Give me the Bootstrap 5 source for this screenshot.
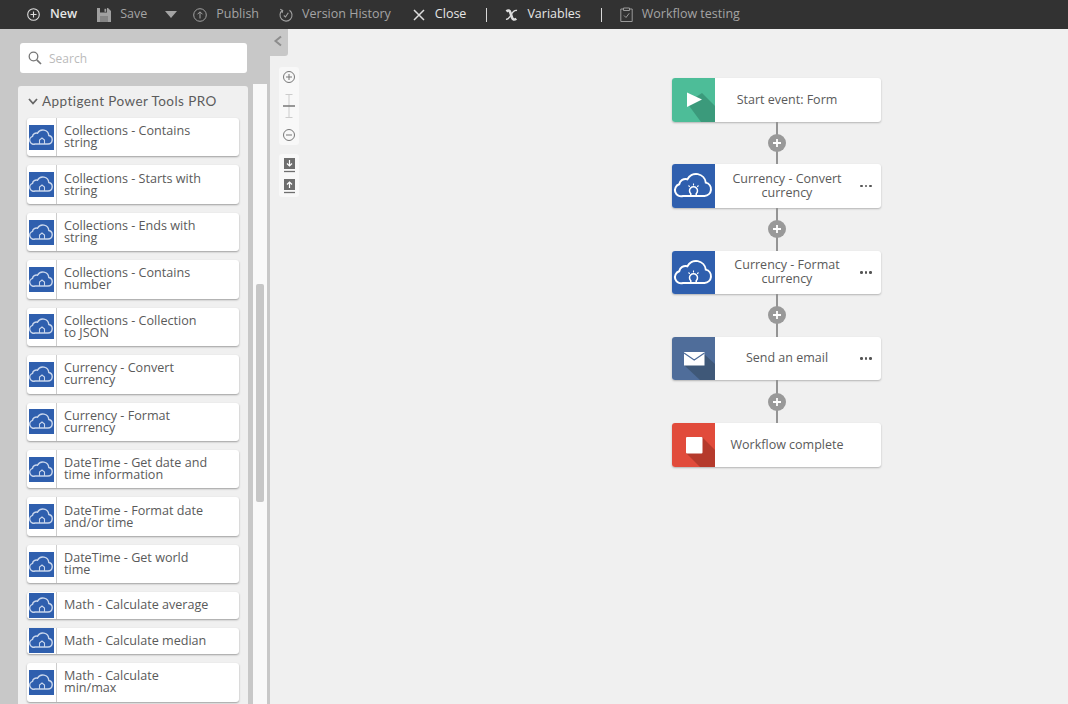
<!DOCTYPE html>
<html lang="en">
<head>
  <meta charset="UTF-8">
  <title>Workflow designer</title>
  <link href="https://cdn.jsdelivr.net/npm/bootstrap@5.3.0/dist/css/bootstrap.min.css" rel="stylesheet">
  <style>
    html, body { height: 100%; overflow: hidden; }
    body { font-family: "Open Sans", "Liberation Sans", sans-serif; font-size: 12px; color: #555; background: #f0f0f0; }

    .topbar { height: 29px; background: #323232; padding-left: 27px; color: #a4a4a4; font-size: 12.5px; }
    .tb-item { margin-right: 20px; gap: 9px; }
    .tb-item svg { display: block; flex: none; }
    .tb-on { color: #e6e6e6; }
    .tb-strong { font-weight: 600; gap: 10px; }
    .tb-close { gap: 10px; margin-left: 2px; }
    .tb-sep { width: 1px; height: 14px; background: #d8d8d8; margin-right: 18px; }
    .tb-caret { margin-right: 16px; margin-left: -2px; width: 0; height: 0; border: 6.5px solid transparent; border-top: 7px solid #a4a4a4; border-bottom: 0; }

    .main { height: 675px; }
    .side { width: 270px; background: #c8c8c8; flex: none; }
    .searchbox { position: relative; width: 227px; height: 30px; margin: 14px 0 13px 20px; background: #fff; border-radius: 3px; padding-left: 29px; color: #bbb; font-size: 12px; line-height: 31px; }
    .searchbox svg { position: absolute; left: 8px; top: 8px; }
    .side-body { height: 618px; }
    .panel { width: 230px; margin-left: 18px; background: #f0f0f0; border-radius: 3px 3px 0 0; padding: 0 9px; overflow: hidden; }
    .panel-head { height: 32px; padding-bottom: 2px; font-family: Lato, "Open Sans", sans-serif; font-size: 13.5px; letter-spacing: .43px; color: #5c5c5c; gap: 4px; margin-left: 1px; }
    .track { width: 14px; margin: -2px 0 0 5px; background: #f9f9f9; }
    .thumb { width: 8px; height: 218px; margin: 200px 0 0 3px; background: #c6c6c6; border-radius: 2px; }

    .tool { height: 38.43px; margin-bottom: 9px; background: #fff; border-radius: 3px; box-shadow: 0 1px 2px rgba(0,0,0,.35); }
    .tool-single { height: 26.5px; }
    .tool-icon { width: 30px; flex: none; border-right: 1px solid #ccc; padding-left: 2px; }
    .tool-text { padding-left: 7px; line-height: 12px; font-size: 12.6px; color: #5a5a5a; }

    .canvas { position: relative; flex: 1; background: #f0f0f0; padding-left: 9px; }
    .tab { position: absolute; left: 0; top: 0; width: 18px; height: 27px; background: #c8c8c8; border-radius: 0 0 3px 0; padding: 6px 0 0 3px; }
    .tab svg { display: block; }
    .zoombar { width: 20px; flex: none; margin-top: 38px; gap: 9px; }
    .zoom-group { background: #f8f8f8; border-radius: 3px; }
    .flow { margin: 49px 0 0 373px; width: 209px; }
    .node { height: 43.5px; background: #fff; border-radius: 3px; box-shadow: 0 1px 2px rgba(0,0,0,.25); overflow: hidden; }
    .node-icon { width: 43px; flex: none; }
    .node-icon svg { display: block; }
    .node-text { width: 144px; text-align: center; font-size: 12.5px; line-height: 14.5px; color: #5a5a5a; }
    .node-dots { width: 13px; margin-left: 1px; gap: 2px; }
    .node-dots i { width: 2.5px; height: 2.5px; border-radius: 50%; background: #555; }
    .wire { position: relative; height: 42.75px; }
    .wire::before { content: ""; position: absolute; left: 103.5px; top: 0; bottom: 0; width: 2px; background: #949494; }
    .plus { position: relative; width: 18px; height: 18px; margin-left: 95.5px; border-radius: 50%; background: #999; }
    .plus svg { display: block; }
  </style>
</head>
<body>
  <svg width="0" height="0" class="position-absolute">
    <symbol id="cloud" viewBox="0 0 25 25">
      <path d="M6 19h13a4.300 4.300 0 0 0 .8-8.500 6 6 0 0 0-11.300-2.300 4 4 0 0 0-5 3.200A3.800 3.800 0 0 0 6 19z" fill="none" stroke="#c9d6ec" stroke-width="1.400"/>
      <path d="M10.500 19v-4l2.500-2 2.500 2v4" fill="none" stroke="#c9d6ec" stroke-width="1.100"/>
    </symbol>
    <symbol id="cloud-big" viewBox="0 0 43 44">
      <path d="M11 32h21.500a6.800 6.800 0 0 0 1.300-13.400 9.800 9.800 0 0 0-18.400-3.400 6.500 6.500 0 0 0-8.200 5.100A6 6 0 0 0 11 32z" fill="none" stroke="#fff" stroke-width="2"/>
      <path d="M18.800 32v-2.300a4 4 0 1 1 5.400 0V32" fill="none" stroke="#fff" stroke-width="1.500"/>
      <path d="M21.500 19.500v2M16.500 21.500l1.300 1.300M26.500 21.500l-1.300 1.300" stroke="#fff" stroke-width="1.100"/>
    </symbol>
  </svg>

  <div class="topbar d-flex align-items-center">
    <div class="tb-item tb-on tb-strong d-flex align-items-center">
      <svg width="13" height="13" viewBox="0 0 13 13" fill="none" stroke="#ddd" stroke-width="1.100"><circle cx="6.500" cy="6.500" r="5.800"/><path d="M6.500 3.500v6M3.500 6.500h6"/></svg>
      <span>New</span>
    </div>
    <div class="tb-item d-flex align-items-center">
      <svg width="14" height="14" viewBox="0 0 14 14"><path d="M0 0h11l3 3v11H0z" fill="#a0a0a0"/><path d="M3 0h7v4.500H3z" fill="#323232"/><path d="M7.500 .8h1.700v3H7.500z" fill="#a0a0a0"/><path d="M3 8h8v6H3z" fill="#323232" opacity=".25"/></svg>
      <span>Save</span>
    </div>
    <div class="tb-caret"></div>
    <div class="tb-item d-flex align-items-center">
      <svg width="14" height="14" viewBox="0 0 14 14" fill="none" stroke="#a0a0a0" stroke-width="1"><circle cx="7" cy="7" r="6.300"/><path d="M7 10.500V4M4.500 6.300 7 3.800l2.500 2.500"/></svg>
      <span>Publish</span>
    </div>
    <div class="tb-item d-flex align-items-center">
      <svg width="14" height="15" viewBox="0 0 14 15" fill="none" stroke="#a0a0a0" stroke-width="1.100"><path d="M3.400 3.300A6 6 0 1 0 10.500 3.200"/><path d="M1.200 2.300 3.700 3.500 3 6"/><path d="M4.800 8.500 6.500 10 9.300 5.800"/></svg>
      <span>Version History</span>
    </div>
    <div class="tb-item tb-close tb-on d-flex align-items-center">
      <svg width="12" height="12" viewBox="0 0 12 12" stroke="#ddd" stroke-width="1.500"><path d="M1 1l10 10M11 1 1 11"/></svg>
      <span>Close</span>
    </div>
    <div class="tb-sep"></div>
    <div class="tb-item tb-on d-flex align-items-center">
      <svg width="13" height="12" viewBox="0 0 13 12" fill="none" stroke="#ddd"><path d="M1.500 2.500C3.200.8 4.600 1.200 5.500 4l1.500 4.500c.8 2.200 2.200 2.700 4.300 1.200" stroke-width="2.600"/><path d="M12 1.500C9.500.8 8 2.500 6.300 5.500 4.500 8.500 3.400 10.800 1 10.200" stroke-width="1.400"/></svg>
      <span>Variables</span>
    </div>
    <div class="tb-sep"></div>
    <div class="tb-item d-flex align-items-center">
      <svg width="13" height="15" viewBox="0 0 13 15" fill="none" stroke="#9a9a9a" stroke-width="1"><path d="M3.500 2H.8v12.500h11.400V2H9.500"/><path d="M3.500 1h6v2.500h-6z"/><path d="M4 8.500 6 10.500 9.200 6.300"/></svg>
      <span>Workflow testing</span>
    </div>
  </div>

  <div class="main d-flex">
    <div class="side">
      <div class="searchbox">
        <svg width="14" height="14" viewBox="0 0 14 14" fill="none" stroke="#777" stroke-width="1.300"><circle cx="5.500" cy="5.500" r="4.300"/><path d="M8.800 8.800 13 13" stroke-width="1.700"/></svg>
        Search
      </div>
      <div class="side-body d-flex">
        <div class="panel">
          <div class="panel-head d-flex align-items-center">
            <svg width="10" height="7" viewBox="0 0 10 7" fill="none" stroke="#666" stroke-width="1.800"><path d="M1 1l4 4.500L9 1"/></svg>
            <span>Apptigent Power Tools PRO</span>
          </div>
          <div id="toolList"></div>
        </div>
        <div class="track"><div class="thumb"></div></div>
      </div>
    </div>

    <div class="canvas d-flex">
      <div class="tab">
        <svg width="10" height="12" viewBox="0 0 10 12" fill="none" stroke="#8d8d8d" stroke-width="2"><path d="M8 1.500 2.500 6 8 10.500"/></svg>
      </div>
      <div class="zoombar d-flex flex-column">
        <div class="zoom-group">
          <svg width="20" height="78" viewBox="0 0 20 78" class="d-block" fill="none">
            <circle cx="10" cy="10" r="5.500" stroke="#777"/><path d="M7 10h6M10 7v6" stroke="#777"/>
            <path d="M6.500 27.500h7M6.500 50.500h7M10 27.500v23" stroke="#ccc"/>
            <path d="M4 39h12" stroke="#777" stroke-width="1.500"/>
            <circle cx="10" cy="68" r="5.500" stroke="#777"/><path d="M7 68h6" stroke="#777"/>
          </svg>
        </div>
        <div class="zoom-group">
          <svg width="20" height="43" viewBox="0 0 20 43" class="d-block">
            <path d="M5 4h11v11H5z" fill="#6e6e6e"/><path d="M10.500 6v6M8 9.500l2.500 2.500L13 9.500" fill="none" stroke="#fff" stroke-width="1.200"/><path d="M5 17.500h11" stroke="#6e6e6e" stroke-width="1.300"/>
            <path d="M5 25h11v11H5z" fill="#6e6e6e"/><path d="M10.500 34v-6M8 30.500l2.500-2.500 2.500 2.500" fill="none" stroke="#fff" stroke-width="1.200"/><path d="M5 38.500h11" stroke="#6e6e6e" stroke-width="1.300"/>
          </svg>
        </div>
      </div>

      <div class="flow">
        <div class="node d-flex">
          <div class="node-icon">
            <svg width="43" height="44" viewBox="0 0 43 44"><path d="M0 0h43v44H0z" fill="#4dbd98"/><path d="M15 25 30 15 43 28v16H29z" fill="#3b9a7b"/><path d="M15 14.500l15 7-15 7.500z" fill="#fff"/></svg>
          </div>
          <div class="node-text d-flex align-items-center justify-content-center">Start event: Form</div>
        </div>
        <div class="wire d-flex align-items-center"><div class="plus"></div></div>
        <div class="node d-flex">
          <div class="node-icon"><svg width="43" height="44"><rect width="43" height="44" fill="#2f5fae"/><use href="#cloud-big"/></svg></div>
          <div class="node-text d-flex align-items-center justify-content-center">Currency - Convert<br>currency</div>
          <div class="node-dots d-flex align-items-center"><i></i><i></i><i></i></div>
        </div>
        <div class="wire d-flex align-items-center"><div class="plus"></div></div>
        <div class="node d-flex">
          <div class="node-icon"><svg width="43" height="44"><rect width="43" height="44" fill="#2f5fae"/><use href="#cloud-big"/></svg></div>
          <div class="node-text d-flex align-items-center justify-content-center">Currency - Format<br>currency</div>
          <div class="node-dots d-flex align-items-center"><i></i><i></i><i></i></div>
        </div>
        <div class="wire d-flex align-items-center"><div class="plus"></div></div>
        <div class="node d-flex">
          <div class="node-icon">
            <svg width="43" height="44" viewBox="0 0 43 44"><path d="M0 0h43v44H0z" fill="#4f6d9a"/><path d="M12 28 32 17 43 27v17H29z" fill="#3f5878"/><path d="M12 15h20.500v13.500H12z" fill="#fff"/><path d="M12 16l10.200 7 10.300-7" fill="none" stroke="#4f6d9a" stroke-width="1.200"/></svg>
          </div>
          <div class="node-text d-flex align-items-center justify-content-center">Send an email</div>
          <div class="node-dots d-flex align-items-center"><i></i><i></i><i></i></div>
        </div>
        <div class="wire d-flex align-items-center"><div class="plus"></div></div>
        <div class="node d-flex">
          <div class="node-icon">
            <svg width="43" height="44" viewBox="0 0 43 44"><path d="M0 0h43v44H0z" fill="#e14b3b"/><path d="M14 30 30 14 43 27v17H28z" fill="#b53a2c"/><rect x="14" y="14" width="16.500" height="16.500" rx="1" fill="#fff"/></svg>
          </div>
          <div class="node-text d-flex align-items-center justify-content-center">Workflow complete</div>
        </div>
      </div>
    </div>
  </div>

  <script>
    const tools = [
      "Collections - Contains<br>string",
      "Collections - Starts with<br>string",
      "Collections - Ends with<br>string",
      "Collections - Contains<br>number",
      "Collections - Collection<br>to JSON",
      "Currency - Convert<br>currency",
      "Currency - Format<br>currency",
      "DateTime - Get date and<br>time information",
      "DateTime - Format date<br>and/or time",
      "DateTime - Get world<br>time",
      "Math - Calculate average",
      "Math - Calculate median",
      "Math - Calculate<br>min/max"
    ];

    const list = document.getElementById("toolList");
    tools.forEach(name => {
      const single = !name.includes("<br>");
      const row = document.createElement("div");
      row.className = "tool d-flex" + (single ? " tool-single" : "");
      row.innerHTML = `
        <div class="tool-icon d-flex align-items-center">
          <svg width="25" height="25"><rect width="25" height="25" fill="#2f5fae"/><use href="#cloud"/></svg>
        </div>
        <div class="tool-text d-flex align-items-center"><span>${name}</span></div>`;
      list.appendChild(row);
    });

    document.querySelectorAll(".plus").forEach(p => {
      p.innerHTML = '<svg width="18" height="18"><path d="M9 5v8M5 9h8" stroke="#fff" stroke-width="1.800"/></svg>';
    });
  </script>
</body>
</html>
